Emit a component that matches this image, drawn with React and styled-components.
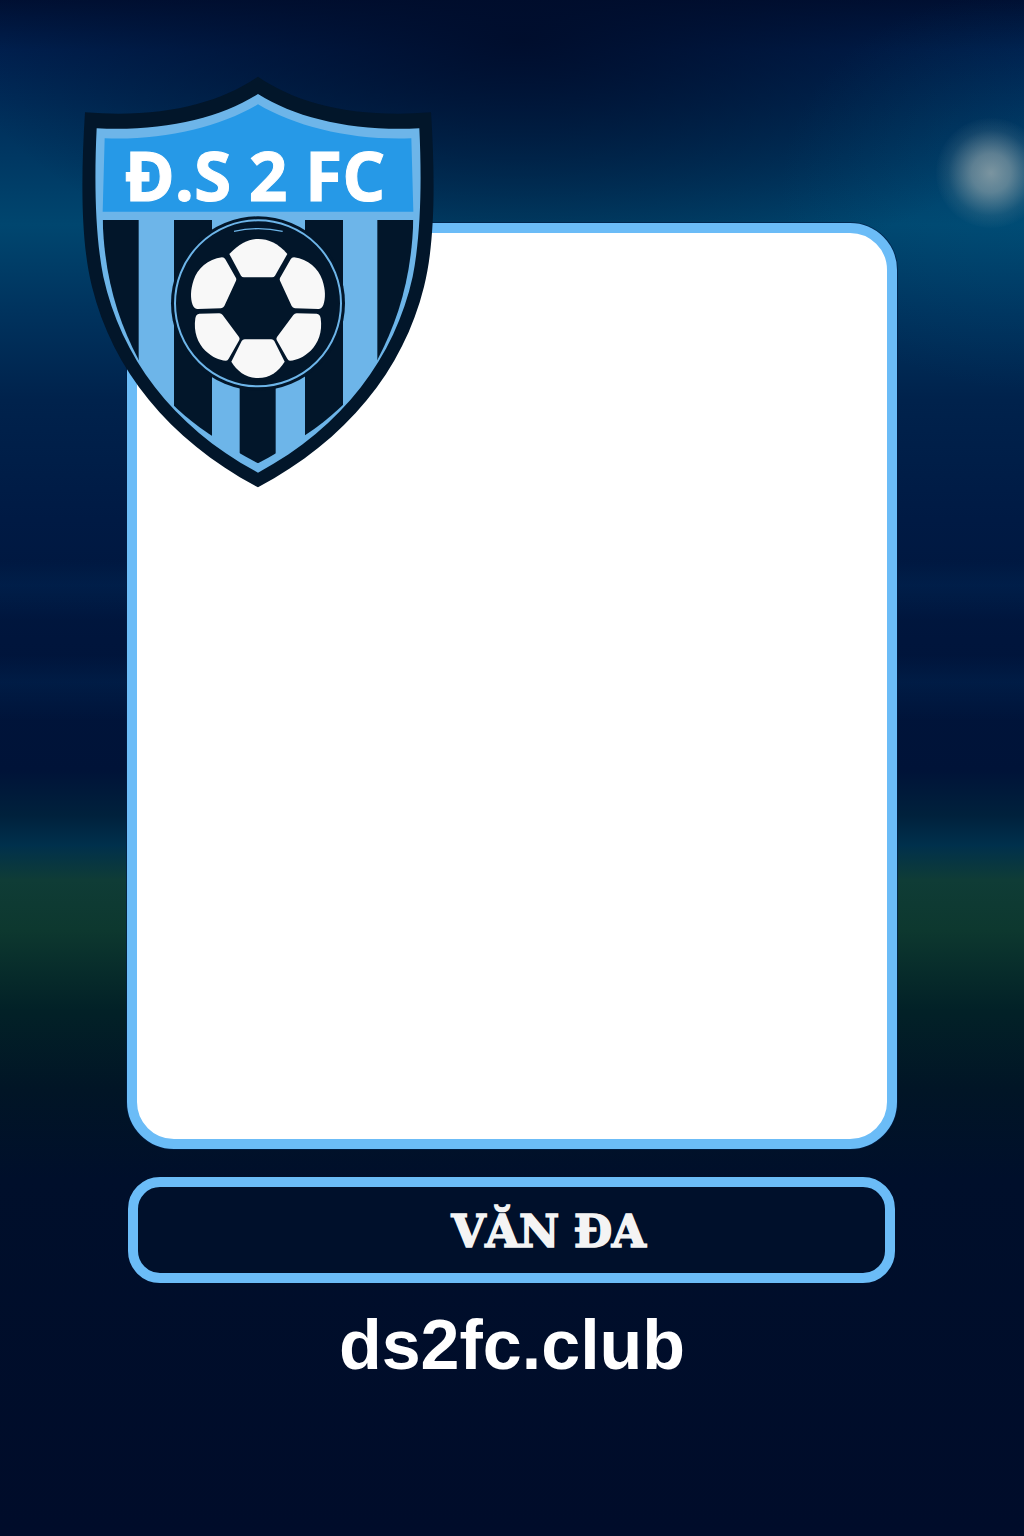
import styled, { createGlobalStyle } from "styled-components";

const GlobalStyle = createGlobalStyle`
    html, body {
        margin: 0;
        padding: 0;
        background: #000a28;
    }
`

// shield is drawn in the crop's coordinates: 1140x1290 maps to 380x430 px
const OUTER = "M564 20 C680 100 850 145 1083 127 C1096 330 1095 520 1062 650 C1000 900 830 1110 564 1252 C298 1110 128 900 66 650 C33 520 32 330 45 127 C278 145 448 100 564 20 Z"
const LIGHT = "M564 72 C680 145 850 185 1048 175 C1056 340 1052 500 1028 620 C975 860 820 1070 564 1208 C308 1070 153 860 100 620 C76 500 72 340 80 175 C278 185 448 145 564 72 Z"
const BANNER = "M564 103 C680 172 850 212 1024 205 L1030 425 L98 425 L104 205 C278 212 448 172 564 103 Z"
const INNER = "M98 450 L1030 450 C1025 620 985 750 922 870 C850 1000 740 1085 564 1180 C388 1085 278 1000 206 870 C143 750 103 620 98 450 Z"

const PANEL_TOP = "M478 552 C510 520 535 507 565 507 C595 507 625 520 652 552 L615 617 Q612 622 606 622 L522 622 Q516 622 513 617 Z"
const PANEL_UPPER = "M672 562 C715 568 745 595 757 630 C767 660 767 685 760 705 Q755 717 745 717 L675 715 Q668 714 665 708 L630 632 Q628 628 630 624 L662 568 Q665 562 672 562 Z"
const PANEL_LOWER = "M680 730 L740 731 Q750 732 752 745 C758 785 745 820 722 842 C700 862 682 870 660 872 Q655 872 652 866 L620 810 Q618 806 621 801 L670 735 Q674 730 680 730 Z"
const PANEL_BOTTOM = "M524 808 L604 808 Q610 808 613 813 L644 875 C625 905 600 924 564 924 C528 924 503 905 484 875 L515 813 Q518 808 524 808 Z"

function Crest() {
    return (
        <CrestSvg viewBox="0 0 1140 1290">
            <defs>
                <clipPath id="inner-shield">
                    <path d={INNER} />
                </clipPath>
            </defs>
            <path d={OUTER} fill="#02162a" />
            <path d={LIGHT} fill="#6db5e9" />
            <path d={BANNER} fill="#2699e7" />
            <g clipPath="url(#inner-shield)" fill="#02162a">
                <rect x="90" y="450" width="116" height="800" />
                <rect x="312" y="450" width="114" height="800" />
                <rect x="509" y="900" width="108" height="400" />
                <rect x="705" y="450" width="114" height="800" />
                <rect x="922" y="450" width="116" height="800" />
            </g>
            <circle cx="564" cy="700" r="261" fill="#02162a" />
            <circle cx="564" cy="700" r="249" fill="none" stroke="#6db5e9" strokeWidth="6" />
            <path d="M492 484 Q564 468 638 484" fill="none" stroke="#6db5e9" strokeWidth="4" />
            <g fill="#f8f8f8">
                <path d={PANEL_TOP} />
                <path d={PANEL_UPPER} />
                <path d={PANEL_UPPER} transform="matrix(-1 0 0 1 1128 0)" />
                <path d={PANEL_LOWER} />
                <path d={PANEL_LOWER} transform="matrix(-1 0 0 1 1128 0)" />
                <path d={PANEL_BOTTOM} />
            </g>
            <CrestText x="555" y="392" textAnchor="middle" textLength="782" lengthAdjust="spacingAndGlyphs">Đ.S 2 FC</CrestText>
        </CrestSvg>
    )
}

export default function App() {
    return (
        <>
            <GlobalStyle />
            <Page>
                <Glow />
                <Crest />
                <PhotoFrame />
                <NameBar>
                    <PlayerName>VĂN ĐA</PlayerName>
                </NameBar>
                <SiteName>ds2fc.club</SiteName>
            </Page>
        </>
    )
}

const Page = styled.div`
    position: relative;
    width: 1024px;
    height: 1536px;
    overflow: hidden;
    box-sizing: border-box;
    padding: 223px 127px 0;
    display: flex;
    flex-direction: column;
    background:
        radial-gradient(ellipse 240px 200px at 1020px 190px, rgba(0, 100, 140, 0.22), rgba(0, 100, 140, 0) 100%),
        radial-gradient(ellipse 560px 250px at 520px 40px, rgba(0, 12, 42, 0.9), rgba(0, 12, 42, 0) 100%),
        linear-gradient(rgba(0, 50, 100, 0) 0, rgba(0, 50, 100, 0) 560px, rgba(0, 50, 100, 0.25) 585px, rgba(0, 50, 100, 0) 620px, rgba(0, 50, 100, 0) 655px, rgba(0, 50, 100, 0.25) 682px, rgba(0, 50, 100, 0) 720px),
        linear-gradient(#001033 0, #00204f 50px, #00305c 120px, #00466f 225px, #00335e 310px, #00224c 400px, #001a44 520px, #00153c 640px, #001338 770px, #00213c 815px, #00304c 845px, #0f3c36 880px, #0d382f 930px, #022127 1010px, #011526 1090px, #000f2b 1180px, #000c2a 1536px);
`

const Glow = styled.div`
    position: absolute;
    left: 936px;
    top: 118px;
    width: 110px;
    height: 110px;
    border-radius: 50%;
    background: radial-gradient(circle, rgba(170, 180, 180, 0.72) 0, rgba(170, 180, 180, 0.55) 25%, rgba(170, 180, 180, 0.12) 55%, rgba(170, 180, 180, 0) 72%);
`

const CrestSvg = styled.svg`
    position: absolute;
    left: 70px;
    top: 70px;
    width: 380px;
    height: 430px;
    z-index: 2;
`

const CrestText = styled.text`
    font-family: "Open Sans", "Noto Sans", sans-serif;
    font-weight: 700;
    font-size: 206px;
    fill: #ffffff;
    stroke: #ffffff;
    stroke-width: 3px;
`

const PhotoFrame = styled.div`
    box-sizing: border-box;
    width: 770px;
    height: 926px;
    background: #ffffff;
    border: 10px solid #6bbcf7;
    border-radius: 47px;
    box-shadow: 0 0 0 1px rgba(0, 30, 70, 0.7);
`

const NameBar = styled.div`
    box-sizing: border-box;
    width: 767px;
    height: 106px;
    margin: 28px 0 0 1px;
    padding: 4px 0 0 74px;
    display: flex;
    align-items: center;
    justify-content: center;
    background: #00102b;
    border: 10px solid #6bbcf7;
    border-radius: 32px;
`

const PlayerName = styled.span`
    font-family: "DejaVu Serif", serif;
    font-weight: 700;
    font-size: 44px;
    line-height: 1;
    letter-spacing: -0.4px;
    color: #f4f4f4;
    -webkit-text-stroke: 1.6px #f4f4f4;
`

const SiteName = styled.div`
    margin-top: 22px;
    text-align: center;
    font-family: "Liberation Sans", Arial, sans-serif;
    font-weight: 700;
    font-size: 70px;
    line-height: 80px;
    color: #ffffff;
`
